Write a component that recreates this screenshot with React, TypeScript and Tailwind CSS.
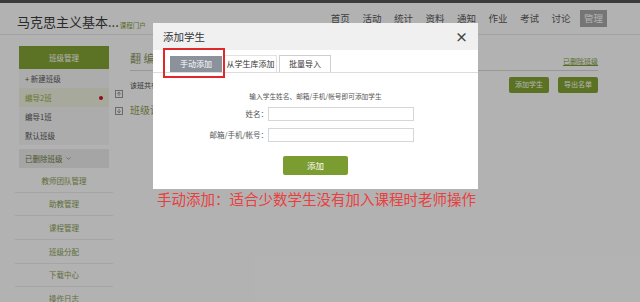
import { ArrowDown, ArrowUp, ChevronDown } from 'lucide-react'

const nav = ['首页', '活动', '统计', '资料', '通知', '作业', '考试', '讨论']
const classes = [
  { name: '编导2班', active: true },
  { name: '编导1班', active: false },
  { name: '默认班级', active: false },
]
const menu = ['教师团队管理', '助教管理', '课程管理', '班级分配', '下载中心', '操作日志']

export default function App() {
  return (
    <div className="relative h-[302px] w-[640px] overflow-hidden bg-white font-['Noto_Sans_CJK_SC','Liberation_Sans',sans-serif]">
      {/* page behind the modal */}
      <div className="h-[3px] bg-[#555]" />
      <header className="flex h-[32px] items-center justify-between border-b border-[#e8e8e8] pl-[17px] pr-[33px]">
        <div className="mt-[6px] flex items-end gap-[1px]">
          <span className="text-[13px] leading-none text-[#3c3c3c]">马克思主义基本...</span>
          <span className="text-[6.5px] leading-none text-[#7f9a3a]">课程门户</span>
        </div>
        <nav className="flex items-center gap-[12.5px] text-[9.5px] text-[#5a5a5a]">
          {nav.map((n) => (
            <span key={n}>{n}</span>
          ))}
          <span className="-ml-[3px] bg-[#a8a8a8] px-[4px] py-[1px] text-white">管理</span>
        </nav>
      </header>

      <div className="flex">
        <aside className="ml-[19px] mt-[11px] w-[90px] text-[7.5px]">
          <div className="flex h-[23px] items-center justify-center bg-[#84a434] text-white">班级管理</div>
          <div className="bg-[#f7f7f7]">
            <div className="flex h-[19px] items-center px-[6px] text-[#5a5a5a]">+&nbsp;新建班级</div>
            {classes.map((c) => (
              <div
                key={c.name}
                className={`flex h-[19px] items-center justify-between px-[6px] ${c.active ? 'bg-[#eef3df] text-[#94ad4e]' : 'text-[#555]'}`}
              >
                {c.name}
                {c.active && <span className="h-[4px] w-[4px] rounded-full bg-[#d0102a]" />}
              </div>
            ))}
          </div>
          <div className="mt-[4px] flex h-[19px] items-center gap-[2px] bg-[#ededed] px-[6px] text-[#6b7a3c]">
            已删除班级 <ChevronDown size={7} strokeWidth={2} />
          </div>
          <div className="-mx-[4px] mt-[1px]">
            {menu.map((m) => (
              <div key={m} className="flex h-[23.7px] items-center justify-center border-b border-[#ececec] text-[#8a9c52]">
                {m}
              </div>
            ))}
          </div>
        </aside>

        <div className="ml-[6px] mt-[55px] flex flex-col gap-[9px]">
          <div className="flex h-[8px] w-[8px] items-center justify-center border border-[#999] text-[#666]">
            <ArrowUp size={6} strokeWidth={2.5} />
          </div>
          <div className="flex h-[8px] w-[8px] items-center justify-center border border-[#999] text-[#666]">
            <ArrowDown size={6} strokeWidth={2.5} />
          </div>
        </div>

        <main className="ml-[7px] mr-[42px] mt-[15px] flex-1">
          <div className="flex items-end justify-between border-b border-[#d8d8d8] pb-[3px]">
            <span className="text-[11px] text-[#8c9a68]">翻 编导2班</span>
            <span className="text-[7px] text-[#7f9a3a] underline">已删除班级</span>
          </div>
          <div className="mt-[6px] flex items-start justify-between">
            <span className="mt-[3px] text-[7px] text-[#444]">该班共有0名学生</span>
            <div className="flex gap-[9px]">
              <button className="h-[16px] w-[40px] rounded-[2px] bg-[#82a431] text-[7px] text-white">添加学生</button>
              <button className="h-[16px] w-[40px] rounded-[2px] bg-[#82a431] text-[7px] text-white">导出名单</button>
            </div>
          </div>
          <div className="mt-[9px] text-[10px] text-[#8ea052]">班级设置</div>
        </main>
      </div>

      {/* overlay */}
      <div className="absolute inset-0 bg-black/30" />

      {/* modal */}
      <div className="absolute left-[153px] top-[23px] h-[166px] w-[325px] bg-white">
        <div className="flex h-[27px] items-center justify-between bg-[#f0f0f0] pl-[10px] pr-[10px]">
          <span className="text-[10.5px] text-[#333]">添加学生</span>
          <span className="text-[13px] font-bold leading-none text-[#444]">×</span>
        </div>
        <div className="relative flex h-[23px] items-end gap-[2px] border-b border-[#dcdcdc] pl-[17px] text-[8px]">
          <div className="flex h-[16px] w-[52px] items-center justify-center bg-[#8b929c] text-white">手动添加</div>
          <div className="flex h-[17px] w-[53px] items-center justify-center border border-b-0 border-[#e2e2e2] text-[#333]">从学生库添加</div>
          <div className="flex h-[17px] w-[52px] items-center justify-center border border-b-0 border-[#cfcfcf] text-[#333]">批量导入</div>
          <div className="absolute left-[10px] top-[-2px] h-[30px] w-[62px] border-2 border-[#e0282a]" />
        </div>
        <div className="flex flex-col items-center">
          <p className="mt-[18px] text-[6.7px] leading-[10px] text-[#555]">输入学生姓名、邮箱/手机/帐号即可添加学生</p>
          <div className="mt-[6px] grid w-full grid-cols-[115px_146px] items-center gap-y-[7px] text-[7.5px] text-[#555]">
            <span className="text-right">姓名：</span>
            <input className="h-[14px] border border-[#d6d6d6] outline-none" />
            <span className="text-right">邮箱/手机/帐号：</span>
            <input className="h-[14px] border border-[#d6d6d6] outline-none" />
          </div>
          <button className="mt-[14px] h-[19px] w-[65px] rounded-[2px] bg-[#7b9c30] text-[8.5px] text-white">添加</button>
        </div>
      </div>

      <p className="absolute left-[157px] top-[190px] text-[14.5px] leading-[17px] text-[#e8403e]">
        手动添加：适合少数学生没有加入课程时老师操作
      </p>
    </div>
  )
}
